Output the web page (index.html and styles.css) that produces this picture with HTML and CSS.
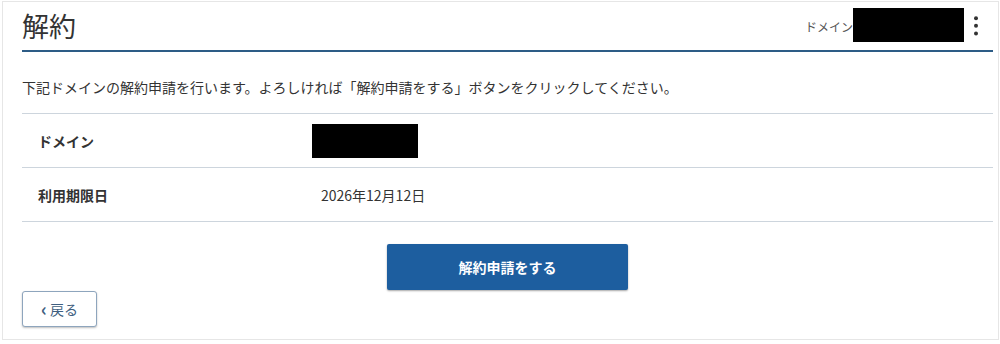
FILE: index.html
```html
<!DOCTYPE html>
<html lang="ja">
<head>
<meta charset="utf-8">
<title>解約</title>
<link rel="stylesheet" href="styles.css">
</head>
<body>
<div class="frame">
  <header class="header">
    <h1 class="title">解約</h1>
    <div class="header-right">
      <span class="domain-label">ドメイン</span>
      <span class="redact redact-head"></span>
      <svg class="kebab" width="4" height="20" viewBox="0 0 4 20" aria-hidden="true">
        <circle cx="2" cy="2.2" r="2" fill="#333"/>
        <circle cx="2" cy="9.8" r="2" fill="#333"/>
        <circle cx="2" cy="17.6" r="2" fill="#333"/>
      </svg>
    </div>
  </header>
  <p class="desc">下記ドメインの解約申請を行います。よろしければ「解約申請をする」ボタンをクリックしてください。</p>
  <div class="table">
    <div class="row">
      <div class="label">ドメイン</div>
      <div class="value"><span class="redact redact-cell"></span></div>
    </div>
    <div class="row">
      <div class="label">利用期限日</div>
      <div class="value"><span class="date">2026年12月12日</span></div>
    </div>
  </div>
  <div class="actions">
    <button class="btn-primary" type="button">解約申請をする</button>
  </div>
  <div class="back-wrap">
    <button class="btn-back" type="button"><span class="chev">‹</span>戻る</button>
  </div>
</div>
</body>
</html>
```

FILE: styles.css
```css
* { box-sizing: border-box; }
html, body { margin: 0; padding: 0; background: #fff; }
body {
  font-family: "Noto Sans CJK JP", "Noto Sans", "Liberation Sans", sans-serif;
  color: #333;
}
.frame {
  margin: 1px 1px 0 2px;
  width: 997px;
  height: 339px;
  border: 1px solid #e6e6e6;
  padding: 0 5px 0 19px;
}
.header {
  height: 50px;
  display: flex;
  align-items: center;
  justify-content: space-between;
  border-bottom: 2px solid #2d5c86;
}
.title {
  margin: 0;
  font-size: 27px;
  font-weight: 400;
  line-height: 36px;
  color: #333;
}
.header-right {
  display: flex;
  align-items: center;
  margin-top: -3px;
  padding-right: 15px;
}
.domain-label {
  font-size: 12px;
  color: #555;
  margin-top: 3px;
}
.redact { display: inline-block; background: #000; }
.redact-head { width: 111px; height: 34px; }
.kebab { margin-left: 10px; display: block; margin-top: 3px; }
.desc {
  margin: 0;
  padding: 25px 0 16px;
  font-size: 14px;
  line-height: 20px;
  color: #333;
}
.table { border-top: 1px solid #cdd5dd; }
.row {
  display: flex;
  align-items: center;
  height: 54px;
  border-bottom: 1px solid #cdd5dd;
}
.label {
  width: 290px;
  padding-left: 16px;
  font-size: 14px;
  font-weight: 700;
  color: #333;
}
.value { font-size: 14px; color: #333; }
.redact-cell { width: 106px; height: 34px; display: block; }
.date { padding-left: 9px; }
.actions {
  display: flex;
  justify-content: center;
  margin-top: 22px;
}
.btn-primary {
  width: 241px;
  height: 46px;
  border: none;
  border-radius: 2px;
  background: #1d5e9f;
  color: #fff;
  font-family: inherit;
  font-size: 14px;
  font-weight: 700;
  box-shadow: 0 1px 2px rgba(0, 0, 0, 0.35);
}
.back-wrap { margin-top: 1px; }
.btn-back {
  width: 75px;
  height: 36px;
  background: #fff;
  border: 1px solid #8ea5bd;
  border-radius: 3px;
  color: #3f5f80;
  font-family: inherit;
  font-size: 14px;
  box-shadow: 0 1px 2px rgba(0, 0, 0, 0.25);
  display: flex;
  align-items: center;
  justify-content: center;
  padding: 0;
}
.chev { font-size: 18px; font-weight: 700; margin-right: 3px; line-height: 1; margin-top: -2px; }
```
